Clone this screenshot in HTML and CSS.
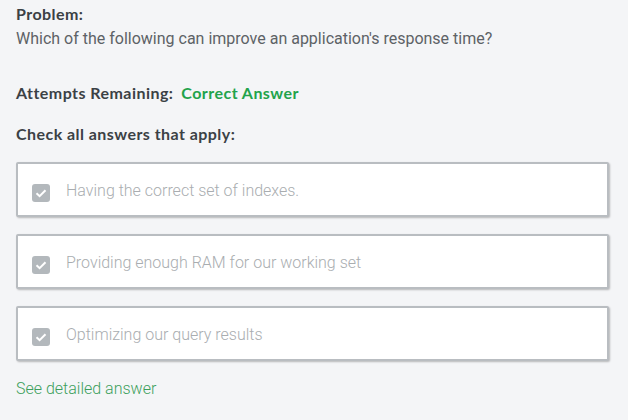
FILE: index.html
```html
<!DOCTYPE html>
<html>
<head>
<meta charset="utf-8">
<link rel="stylesheet" href="styles.css">
</head>
<body>
<div class="page">
  <div class="label">Problem:</div>
  <div class="question">Which of the following can improve an application's response time?</div>
  <div class="attempts"><span class="label">Attempts Remaining:</span> <span class="correct">Correct Answer</span></div>
  <div class="label check-all">Check all answers that apply:</div>
  <div class="options">
    <div class="option">
      <span class="box"><svg viewBox="0 0 18 18" width="18" height="18"><path d="M4.5 9.3 L7.6 12.2 L13.5 6.2" fill="none" stroke="#fff" stroke-width="2"/></svg></span>
      <span class="opt-text">Having the correct set of indexes.</span>
    </div>
    <div class="option">
      <span class="box"><svg viewBox="0 0 18 18" width="18" height="18"><path d="M4.5 9.3 L7.6 12.2 L13.5 6.2" fill="none" stroke="#fff" stroke-width="2"/></svg></span>
      <span class="opt-text">Providing enough RAM for our working set</span>
    </div>
    <div class="option">
      <span class="box"><svg viewBox="0 0 18 18" width="18" height="18"><path d="M4.5 9.3 L7.6 12.2 L13.5 6.2" fill="none" stroke="#fff" stroke-width="2"/></svg></span>
      <span class="opt-text">Optimizing our query results</span>
    </div>
  </div>
  <a class="detail" href="#">See detailed answer</a>
</div>
</body>
</html>
```
FILE: styles.css
```css
html, body {
  margin: 0;
  padding: 0;
  background: #f4f5f7;
}
.page {
  padding: 4px 20px 0 16px;
  font-family: "Lato", "Liberation Sans", sans-serif;
  font-size: 16px;
  line-height: 20px;
  color: #3f4448;
}
.label {
  font-weight: 700;
  letter-spacing: 0.45px;
  color: #3b4145;
}
.question {
  margin-top: 5px;
  font-family: "Roboto", sans-serif;
  color: #5d6266;
  font-size: 16px;
}
.attempts {
  margin-top: 34px;
  display: flex;
  gap: 8px;
}
.correct {
  font-weight: 700;
  letter-spacing: 0.45px;
  color: #22a34b;
}
.check-all {
  margin-top: 21px;
}
.options {
  margin-top: 18px;
  display: flex;
  flex-direction: column;
  gap: 17px;
  width: 593px;
}
.option {
  height: 55px;
  box-sizing: border-box;
  background: #fff;
  border: 2px solid #b9bdc1;
  border-radius: 2px;
  box-shadow: 1px 1px 2px rgba(0,0,0,0.25);
  display: flex;
  align-items: center;
  padding-left: 14px;
  padding-top: 2px;
}
.box {
  width: 18px;
  height: 18px;
  background: #b3b8bc;
  border-radius: 3px;
  display: flex;
  margin-top: 4px;
}
.opt-text {
  margin-left: 16px;
  font-family: "Roboto", sans-serif;
  font-weight: 300;
  font-size: 16px;
  color: #a9adb0;
}
.detail {
  display: block;
  margin-top: 18px;
  font-family: "Roboto", sans-serif;
  font-weight: 300;
  font-size: 16px;
  color: #3c9f5c;
  text-decoration: none;
}
```
